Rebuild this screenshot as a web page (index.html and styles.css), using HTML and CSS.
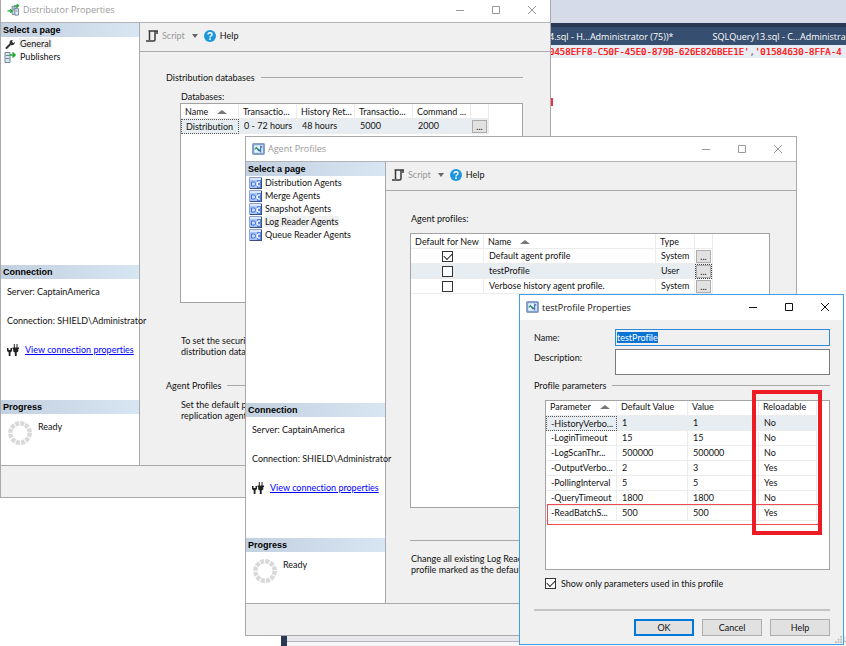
FILE: index.html
```html
<!DOCTYPE html>
<html lang="en">
<head>
<meta charset="utf-8">
<title>Distributor Properties</title>
<link rel="stylesheet" href="styles.css">
</head>
<body>
<svg class="defs" aria-hidden="true">
  <symbol id="i-script" viewBox="0 0 12 12"><path d="M2.500 1H12M3.500 1v9M9 1v8.500q0 1.500-1.500 1.500M0 11h8M11 1v3" fill="none" stroke="#3a3a3a" stroke-width="1.500"/></symbol>
  <symbol id="i-help" viewBox="0 0 12 12"><circle cx="6" cy="6" r="6" fill="#1c97dc"/><path d="M4 4.600q0-1.900 2-1.900t2 1.700q0 1-1.100 1.600-.9.500-.9 1.400" fill="none" stroke="#fff" stroke-width="1.400"/><circle cx="6" cy="9.200" r=".9" fill="#fff"/></symbol>
  <symbol id="i-min" viewBox="0 0 10 10"><path d="M1 5.500h8" stroke="currentColor"/></symbol>
  <symbol id="i-max" viewBox="0 0 10 10"><path d="M1.500 1.500h7v7h-7z" fill="none" stroke="currentColor"/></symbol>
  <symbol id="i-close" viewBox="0 0 10 10"><path d="M1 1l8 8M9 1l-8 8" stroke="currentColor"/></symbol>
  <symbol id="i-plug" viewBox="0 0 12 12"><path d="M0 4h1.500v2h2V4H5v3L3.500 8.500V12H1.700V8.500L0 7zM5.500 3.500h1.300V0h1v3.500h1.700V0h1v3.500H12V5h-.7v2.500L9.700 8.500V12H7.800V8.500L6.200 7.500V5h-.7z" fill="#222"/></symbol>
  <symbol id="i-spin" viewBox="0 0 24 24"><circle cx="12" cy="12" r="9.700" fill="none" stroke="#d9d9d9" stroke-width="4.500" stroke-dasharray="4 1.080"/></symbol>
  <symbol id="i-agent" viewBox="0 0 13 12"><path d="M.5.5h12v11H.5z" fill="#a9c6f8" stroke="#8fa3c8"/><path d="M1 1h11v2H1z" fill="#dde6f8"/><path d="M8 3h4v8H8z" fill="#5c86ea"/><path d="M2.500 5h3l1.500 2-1.500 2h-3z" fill="#cfe0ff" stroke="#3a6ce0"/><path d="M9 4h2v2H9zM9 8h2v2H9z" fill="#c4d8ff"/><path d="M7 7h1.500M8.500 5v4" stroke="#fff"/><path d="M1 11.500h12M12.500 1v11" stroke="#3a4f80"/></symbol>
  <symbol id="i-profile" viewBox="0 0 12 11"><rect x=".5" y=".5" width="11" height="10" rx="1" fill="#7f9fd0" stroke="#8ba2c4"/><path d="M2 2h8v7H2z" fill="#e6f1fa"/><path d="M2.500 6l1.500-2 2 3 1-1" fill="none" stroke="#2c9a60"/><path d="M5 5l3 3V3l1.500 1" fill="none" stroke="#3a69b5"/></symbol>
  <symbol id="i-dist" viewBox="0 0 13 13"><path d="M5 2.500h5v9H5z" fill="#cad7e3" stroke="#71869a"/><path d="M8 5h4v7H8z" fill="#e6edf5" stroke="#71869a"/><path d="M6 4.500h3M6 6.500h2M9 7.500h2" stroke="#71869a"/><path d="M0 7.500h5M3 5.500l2 2-2 2M7 2h5M10 0l2 2-2 2" fill="none" stroke="#28a634" stroke-width="1.300"/></symbol>
  <symbol id="i-wrench" viewBox="0 0 13 12"><path d="M2.500 10L6 6.500" stroke="#333" stroke-width="2" stroke-linecap="round"/><path d="M11 4L9.300 5 8 3.700 8.800 2Q6 1.500 5.500 4 5.200 6.500 7.300 7.200q3 .5 3.700-3.200z" fill="#333"/></symbol>
  <symbol id="i-pub" viewBox="0 0 12 12"><path d="M.5 1.500h5v10h-5z" fill="#dbe6f0" stroke="#71869a"/><path d="M1 4.500h4M1 7.500h4" stroke="#71869a"/><path d="M5 4h5M8 1.500L10.500 4 8 6.500" fill="none" stroke="#1ca52b" stroke-width="1.500"/></symbol>
</svg>

<div class="desktop">
  <section class="editor" aria-label="Query editor">
    <div class="editor-bar"></div>
    <div class="editor-tabs"><span>4.sql - H...Administrator (75))*</span><span>SQLQuery13.sql - C...Administra</span></div>
    <div class="editor-line"><code>0458EFF8-C50F-45E0-879B-626E826BEE1E'<i>,</i>'01584630-8FFA-4</code></div>
    <div class="editor-mark"></div>
  </section>
  <div class="editor-foot"></div>

  <section class="window distributor">
    <header class="title">
      <svg class="ico"><use href="#i-dist"/></svg><h1>Distributor Properties</h1>
      <button aria-label="Minimize"><svg><use href="#i-min"/></svg></button><button aria-label="Maximize"><svg><use href="#i-max"/></svg></button><button aria-label="Close"><svg><use href="#i-close"/></svg></button>
    </header>
    <div class="body">
      <nav class="side">
        <h2>Select a page</h2>
        <ul>
          <li><svg><use href="#i-wrench"/></svg><a class="current" href="#">General</a></li>
          <li><svg><use href="#i-pub"/></svg><a href="#">Publishers</a></li>
        </ul>
        <h2>Connection</h2>
        <div class="connection">
          <p>Server: CaptainAmerica</p>
          <p>Connection: SHIELD\Administrator</p>
          <p><svg><use href="#i-plug"/></svg><a href="#">View connection properties</a></p>
        </div>
        <h2>Progress</h2>
        <div class="progress"><svg><use href="#i-spin"/></svg><span>Ready</span></div>
      </nav>
      <div class="main">
        <div class="toolbar">
          <button class="off"><svg><use href="#i-script"/></svg>Script<i class="drop"></i></button>
          <button><svg><use href="#i-help"/></svg>Help</button>
        </div>
        <div class="pane">
          <h3 class="rule">Distribution databases</h3>
          <div class="inset">
            <p class="caption">Databases:</p>
            <div class="grid">
              <table>
                <colgroup><col class="c-m"><col class="c-m"><col class="c-m"><col class="c-m"><col class="c-m"><col class="c-btn"></colgroup>
                <tr><th>Name<i class="sort"></i></th><th>Transactio...</th><th>History Ret...</th><th>Transactio...</th><th>Command ...</th><th></th></tr>
                <tr class="sel"><td class="focus">Distribution</td><td>0 - 72 hours</td><td>48 hours</td><td>5000</td><td>2000</td><td><button class="more" aria-label="Edit">...</button></td></tr>
              </table>
            </div>
            <p class="note">To set the securit<br>distribution datab</p>
          </div>
          <h3 class="rule">Agent Profiles</h3>
          <p class="inset hint">Set the default pr<br>replication agents</p>
        </div>
      </div>
    </div>
    <footer class="foot"></footer>
  </section>

  <section class="window agents">
    <header class="title">
      <svg class="ico"><use href="#i-profile"/></svg><h1>Agent Profiles</h1>
      <button aria-label="Minimize"><svg><use href="#i-min"/></svg></button><button aria-label="Maximize"><svg><use href="#i-max"/></svg></button><button aria-label="Close"><svg><use href="#i-close"/></svg></button>
    </header>
    <div class="body">
      <nav class="side">
        <h2>Select a page</h2>
        <ul>
          <li><svg><use href="#i-agent"/></svg><a href="#">Distribution Agents</a></li>
          <li><svg><use href="#i-agent"/></svg><a href="#">Merge Agents</a></li>
          <li><svg><use href="#i-agent"/></svg><a href="#">Snapshot Agents</a></li>
          <li><svg><use href="#i-agent"/></svg><a class="current" href="#">Log Reader Agents</a></li>
          <li><svg><use href="#i-agent"/></svg><a href="#">Queue Reader Agents</a></li>
        </ul>
        <h2>Connection</h2>
        <div class="connection">
          <p>Server: CaptainAmerica</p>
          <p>Connection: SHIELD\Administrator</p>
          <p><svg><use href="#i-plug"/></svg><a href="#">View connection properties</a></p>
        </div>
        <h2>Progress</h2>
        <div class="progress"><svg><use href="#i-spin"/></svg><span>Ready</span></div>
      </nav>
      <div class="main">
        <div class="toolbar">
          <button class="off"><svg><use href="#i-script"/></svg>Script<i class="drop"></i></button>
          <button><svg><use href="#i-help"/></svg>Help</button>
        </div>
        <div class="pane">
          <p class="caption">Agent profiles:</p>
          <div class="grid">
            <table>
              <colgroup><col class="c-l"><col class="c-xl"><col class="c-s"><col class="c-btn"></colgroup>
              <tr><th class="mid">Default for New</th><th>Name<i class="sort"></i></th><th>Type</th><th></th></tr>
              <tr><td class="mid"><input type="checkbox" aria-label="Default agent profile" checked></td><td>Default agent profile</td><td>System</td><td><button class="more" aria-label="View">...</button></td></tr>
              <tr class="sel"><td class="mid"><input type="checkbox" aria-label="testProfile"></td><td>testProfile</td><td>User</td><td><button class="more active" aria-label="View">...</button></td></tr>
              <tr><td class="mid"><input type="checkbox" aria-label="Verbose history agent profile"></td><td>Verbose history agent profile.</td><td>System</td><td><button class="more" aria-label="View">...</button></td></tr>
            </table>
          </div>
          <hr>
          <p class="note">Change all existing Log Reac<br>profile marked as the default</p>
        </div>
      </div>
    </div>
    <footer class="foot"></footer>
  </section>

  <section class="window profile">
    <header class="title">
      <svg class="ico"><use href="#i-profile"/></svg><h1>testProfile Properties</h1>
      <button aria-label="Minimize"><svg><use href="#i-min"/></svg></button><button aria-label="Maximize"><svg><use href="#i-max"/></svg></button><button aria-label="Close"><svg><use href="#i-close"/></svg></button>
    </header>
    <form class="form">
      <div class="field"><label for="name">Name:</label><div class="box"><input id="name" type="text" value="testProfile"></div></div>
      <div class="field"><label for="desc">Description:</label><textarea id="desc"></textarea></div>
      <h3 class="rule">Profile parameters</h3>
      <div class="grid">
        <table>
          <colgroup><col class="c-p"><col class="c-p"><col class="c-p"><col class="c-m"></colgroup>
          <tr><th>Parameter<i class="sort"></i></th><th>Default Value</th><th>Value</th><th>Reloadable</th></tr>
          <tr class="sel"><td class="focus">-HistoryVerbo...</td><td>1</td><td>1</td><td>No</td></tr>
          <tr><td>-LoginTimeout</td><td>15</td><td>15</td><td>No</td></tr>
          <tr><td>-LogScanThr...</td><td>500000</td><td>500000</td><td>No</td></tr>
          <tr><td>-OutputVerbo...</td><td>2</td><td>3</td><td>Yes</td></tr>
          <tr><td>-PollingInterval</td><td>5</td><td>5</td><td>Yes</td></tr>
          <tr><td>-QueryTimeout</td><td>1800</td><td>1800</td><td>No</td></tr>
          <tr><td>-ReadBatchS...</td><td>500</td><td>500</td><td>Yes</td></tr>
        </table>
        <div class="mark-row"></div>
        <div class="mark-col"></div>
      </div>
      <label class="check"><input type="checkbox" checked>Show only parameters used in this profile</label>
      <hr>
      <div class="actions"><button type="button" class="ok">OK</button><button type="button">Cancel</button><button type="button">Help</button></div>
    </form>
    <svg class="grip" viewBox="0 0 8 8"><path d="M6 0h2v2H6zM3 3h2v2H3zM6 3h2v2H6zM0 6h2v2H0zM3 6h2v2H3zM6 6h2v2H6z" fill="#bbb"/></svg>
  </section>
</div>
</body>
</html>
```
FILE: styles.css
```css
* { box-sizing: border-box; margin: 0; padding: 0; }
body {
  font: 9px/11px Lato, Roboto, sans-serif;
  font-variant-ligatures: none;
  color: #111;
  background: #fff;
}
button, input, textarea { font: inherit; color: inherit; border: 0; background: none; border-radius: 0; }
h1, h2, h3, th { font-size: inherit; font-weight: normal; text-align: left; }
ul { list-style: none; }
i { font-style: normal; }
svg { flex: none; }
.defs { position: absolute; width: 0; height: 0; }
.desktop { position: relative; min-height: 100vh; overflow: hidden; }

/* Query editor behind the dialogs */
.editor { position: absolute; left: 549px; right: 0; top: 0; white-space: nowrap; overflow: hidden; }
.editor-bar { height: 27px; background: #d6dbe9; border-bottom: 4px solid #293955; }
.editor-tabs {
  display: flex; gap: 39px; height: 18px; line-height: 19px;
  background: #364e6f; color: #fff; font-family: "Open Sans", sans-serif;
}
.editor-line { height: 13px; line-height: 13px; background: #e8edf3; color: #f00; }
.editor-line code { font: 9px/13px "DejaVu Sans Mono", monospace; -webkit-text-stroke: .2px; }
.editor-line i { color: #777; }
.editor-mark { width: 4px; height: 8px; margin-top: 40px; background: #f0304a; }
.editor-foot {
  position: absolute; left: 281px; right: 0; bottom: 0; height: 10px;
  background: linear-gradient(90deg, #293955 6px, transparent 6px), linear-gradient(#e8e8ec 5px, #b5b5bd 5px, #b5b5bd 6px, #f7f7f7 6px);
}

/* Windows */
.window {
  position: absolute; display: flex; flex-direction: column;
  background: #f0f0f0; border: 1px solid #a9a9ad;
}
.distributor { left: 0; right: 295px; top: -3px; bottom: 148px; }
.agents { left: 245px; right: 49px; top: 136px; bottom: 10px; }
.profile { left: 519px; right: 2px; top: 294px; bottom: 1px; border-color: #3f9fe6; }
.title {
  display: flex; align-items: center; height: 25px; padding: 0 0 1px 6px;
  background: #fff; border-bottom: 1px solid #b4b4b8; color: #999;
}
.title .ico { width: 13px; height: 12px; margin-right: 3px; }
.title h1 { flex: 1; font-family: "Open Sans", sans-serif; }
.title button { display: grid; place-items: center; width: 36px; height: 23px; }
.title button svg { width: 10px; height: 10px; }
.profile .title { border-bottom: 0; color: #111; }
.body { flex: 1; display: flex; min-height: 0; border-bottom: 1px solid #a9a9ad; }
.foot { height: 31px; }

.side { display: flex; flex-direction: column; width: 139px; background: #fff; border-right: 1px solid #a9a9ad; }
.agents .side { width: 140px; }
.side h2 {
  height: 14px; padding-left: 2px; font: bold 9px/15px "Liberation Sans", sans-serif; color: #000;
  background: linear-gradient(90deg, #c2d0e0, #d8e5f2);
}
.side ul { flex: 1; }
.side li { display: flex; align-items: center; height: 13px; padding-left: 3px; gap: 2px; }
.side li svg { width: 13px; height: 12px; }
.side li a { padding: 0 1px; color: inherit; text-decoration: none; }
.side li .current { background: #f0f0f0; }
.connection { height: 121px; padding: 7px 0 0 6px; }
.connection p { display: flex; align-items: center; gap: 6px; height: 11px; margin-bottom: 18px; white-space: nowrap; }
.connection svg { width: 12px; height: 12px; }
.connection a { color: #00f; }
.progress { display: flex; gap: 6px; height: 51px; padding: 7px; }
.progress svg { width: 24px; height: 24px; }

.main { flex: 1; min-width: 0; display: flex; flex-direction: column; }
.toolbar { display: flex; gap: 6px; height: 29px; padding: 0 0 3px 6px; border-bottom: 1px solid #a9a9ad; }
.toolbar button { display: flex; align-items: center; gap: 4px; }
.toolbar svg { width: 12px; height: 12px; }
.toolbar .off { color: #999; }
.drop { border: 3px solid transparent; border-top: 4px solid #666; border-bottom: 0; margin-left: 3px; }
.pane { flex: 1; display: flex; flex-direction: column; padding: 20px 27px 0 26px; }
.agents .pane { padding: 22px 26px 28px 24px; }
.rule { display: flex; align-items: center; gap: 6px; white-space: nowrap; }
.rule::after { content: ""; flex: 1; border-top: 1px solid #a8a8a8; }
.inset { padding-left: 14px; }
.caption { padding: 0 0 1px 1px; margin-top: 8px; }
.agents .caption { margin: 0 0 8px; }
.note { padding-left: 1px; margin: 32px 0 23px; white-space: nowrap; }
.hint { padding-left: 15px; margin-top: 8px; white-space: nowrap; }
hr { border: 0; border-top: 1px solid #a8a8a8; }
.agents hr { margin-top: 32px; }
.agents .note { margin: 12px 0 0; }

/* Data grids */
.grid { position: relative; background: #fff; border: 1px solid #a3a3a3; }
.distributor .grid { height: 200px; }
.agents .grid { flex: 1; }
table { table-layout: fixed; width: 1px; border-spacing: 0; }
.c-m { width: 58px; }
.c-l { width: 73px; }
.c-xl { width: 172px; }
.c-s { width: 39px; }
.c-p { width: 71px; }
.c-btn { width: 18px; }
th, td { height: 15px; padding: 0 0 0 5px; border-right: 1px solid #ececec; border-bottom: 1px solid #ececec; line-height: 14px; white-space: nowrap; }
th { padding: 1px 0 0 4px; line-height: 13px; }
.profile th { padding-top: 0; line-height: 12px; vertical-align: top; }
.sel td { background: #e8edf2; }
td.mid, th.mid { text-align: center; padding-left: 0; }
.sel .focus { border: 1px dotted #555; padding-left: 4px; line-height: 13px; }
.sort { display: inline-block; margin-left: 9px; border: 5px solid transparent; border-top: 0; border-bottom: 4px solid #777; vertical-align: 1px; }
td:has(.more) { padding: 0; }
.more { display: block; width: 15px; height: 13px; margin: 0 auto; background: #e1e1e1; border: 1px solid #adadad; line-height: 9px; }
.more.active { outline: 1px dotted #444; }
input[type="checkbox"] { appearance: none; position: relative; display: inline-block; width: 11px; height: 11px; border: 1px solid #333; background: #fff; vertical-align: middle; }
input[type="checkbox"]:checked::after {
  content: ""; position: absolute; left: 1px; top: 1px; width: 7px; height: 4px;
  border: solid #222; border-width: 0 0 1px 1px; transform: rotate(-45deg);
}

/* Profile form */
.form { flex: 1; display: flex; flex-direction: column; padding: 9px 13px 8px 14px; }
.field { display: flex; margin-bottom: 3px; }
.field label { width: 81px; padding-top: 3px; }
.box { flex: 1; height: 17px; padding: 2px 1px; border: 1px solid #2f8ad8; }
.box input { display: block; field-sizing: content; height: 11px; background: #0a74d6; color: #fff; }
.field textarea { flex: 1; height: 26px; resize: none; background: #fff; border: 1px solid #7a7a7a; }
.form .rule { margin: 2px 0 9px; }
.form .grid { flex: 1; margin-left: 11px; }
.mark-row { position: absolute; left: 1px; width: 274px; top: 103px; height: 21px; border: 1px solid #f04a50; }
.mark-col { position: absolute; left: 206px; width: 70px; top: -11px; height: 145px; border: 4px solid #ed1c24; }
.check { display: flex; align-items: center; gap: 5px; margin: 8px 0 20px; align-self: flex-start; padding-left: 11px; }
.form hr { border-top: 2px solid #c4c4c4; }
.actions { display: flex; justify-content: flex-end; gap: 8px; margin-top: 8px; }
.actions button { width: 60px; height: 17px; background: #e1e1e1; border: 1px solid #adadad; }
.actions .ok { border: 2px solid #0078d7; }
.grip { position: absolute; right: 1px; bottom: 1px; width: 7px; height: 7px; }
```
